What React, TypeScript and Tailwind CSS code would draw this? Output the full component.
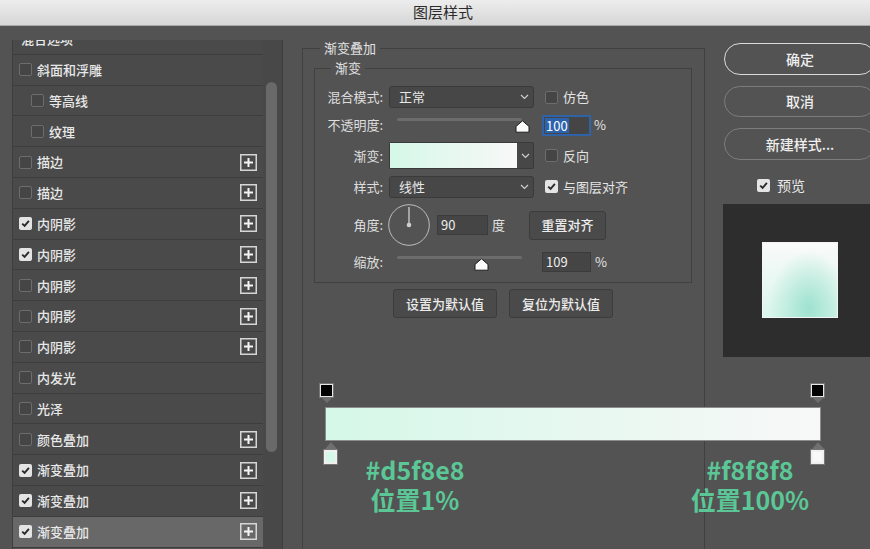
import React from "react";

type Layer = {
  label: string;
  checked?: boolean;
  plus?: boolean;
  sub?: boolean;
  active?: boolean;
  noBox?: boolean;
};

const layers: Layer[] = [
  { label: "混合选项", noBox: true },
  { label: "斜面和浮雕" },
  { label: "等高线", sub: true },
  { label: "纹理", sub: true },
  { label: "描边", plus: true },
  { label: "描边", plus: true },
  { label: "内阴影", checked: true, plus: true },
  { label: "内阴影", checked: true, plus: true },
  { label: "内阴影", plus: true },
  { label: "内阴影", plus: true },
  { label: "内阴影", plus: true },
  { label: "内发光" },
  { label: "光泽" },
  { label: "颜色叠加", plus: true },
  { label: "渐变叠加", checked: true, plus: true },
  { label: "渐变叠加", checked: true, plus: true },
  { label: "渐变叠加", checked: true, plus: true, active: true },
];

function CheckBox({ checked }: { checked?: boolean }) {
  if (checked) {
    return (
      <span className="flex h-[13px] w-[13px] shrink-0 items-center justify-center rounded-[2px] bg-[#e4e4e4]">
        <svg width="9" height="9" viewBox="0 0 9 9">
          <path d="M1.2 4.6 L3.6 6.9 L7.9 1.9" fill="none" stroke="#2a2a2a" strokeWidth="1.9" />
        </svg>
      </span>
    );
  }
  return <span className="block h-[13px] w-[13px] shrink-0 rounded-[2px] border border-[#6d6d6d] bg-[#454545]" />;
}

function PlusBox() {
  return (
    <svg width="17" height="17" viewBox="0 0 17 17" className="shrink-0">
      <rect x="0.75" y="0.75" width="15.5" height="15.5" fill="none" stroke="#d6d6d6" strokeWidth="1.5" />
      <path d="M8.5 4 V13 M4 8.5 H13" stroke="#f4f4f4" strokeWidth="2" />
    </svg>
  );
}

function Chevron() {
  return (
    <svg width="9" height="6" viewBox="0 0 9 6" className="shrink-0">
      <polyline points="1,1 4.5,4.5 8,1" fill="none" stroke="#cfcfcf" strokeWidth="1.2" />
    </svg>
  );
}

function Thumb() {
  return (
    <svg width="15" height="13" viewBox="0 0 15 13">
      <path
        d="M7.5 0.8 L14 6.4 V12.2 H1 V6.4 Z"
        fill="#fafafa"
        stroke="#1c1c1c"
        strokeWidth="1"
        strokeLinejoin="round"
      />
    </svg>
  );
}

function Select({ value }: { value: string }) {
  return (
    <div className="flex h-[22px] w-[145px] shrink-0 items-center justify-between rounded-[3px] border border-[#3a3a3a] bg-[#474747] pl-[9px] pr-[4px] text-[13px] text-[#e8e8e8]">
      <span>{value}</span>
      <Chevron />
    </div>
  );
}

function Label({ text }: { text: string }) {
  return <div className="w-[68px] shrink-0 text-right text-[13px] text-[#dedede]">{text}</div>;
}

function Check({ label, checked }: { label: string; checked?: boolean }) {
  return (
    <div className="ml-[5px] flex items-center gap-[5px] text-[13px] text-[#e4e4e4]">
      <CheckBox checked={checked} />
      <span>{label}</span>
    </div>
  );
}

function Slider({ pos }: { pos: number }) {
  return (
    <div className="relative h-full w-[145px] shrink-0">
      <div className="ml-[8px] mt-[10px] h-[3px] w-[125px] rounded-full bg-[#6c6c6c]" />
      {pos === 1 ? (
        <div className="absolute left-[126px] top-[12px]">
          <Thumb />
        </div>
      ) : (
        <div className="absolute left-[85px] top-[12px]">
          <Thumb />
        </div>
      )}
    </div>
  );
}

function Field({ w, children, active }: { w: string; children: React.ReactNode; active?: boolean }) {
  return (
    <div
      className={
        active
          ? `flex h-[21px] items-center border-2 border-[#2f62a6] bg-[#454545] pl-[1px] text-[13px] text-white ${w}`
          : `flex h-[20px] items-center border border-[#3b3b3b] bg-[#454545] pl-[3px] text-[13px] text-[#ececec] ${w}`
      }
    >
      {children}
    </div>
  );
}

function FlatButton({ children, w }: { children: React.ReactNode; w: string }) {
  return (
    <div
      className={`flex h-[29px] items-center justify-center rounded-[3px] border border-[#3c3c3c] bg-[#4a4a4a] text-[13px] font-medium text-[#ececec] ${w}`}
    >
      {children}
    </div>
  );
}

function PillButton({ children, primary, h }: { children: React.ReactNode; primary?: boolean; h: string }) {
  return (
    <div
      className={`flex w-[152px] items-center justify-center rounded-full text-[14px] font-medium text-[#efefef] ${h} ${
        primary ? "border-[1.5px] border-[#dadada]" : "border border-[#7c7c7c]"
      }`}
    >
      {children}
    </div>
  );
}

function StopTop() {
  return (
    <div className="flex w-[13px] flex-col items-center">
      <div className="h-[13px] w-[13px] border-[1.5px] border-[#e6e6e6] bg-black outline outline-1 outline-[#777]" />
      <svg width="12" height="6" viewBox="0 0 12 6">
        <polygon points="0,0 12,0 6,6" fill="#6e6e6e" />
      </svg>
    </div>
  );
}

function StopBottom({ color }: { color: string }) {
  return (
    <div className="flex w-[13px] flex-col items-center">
      <svg width="12" height="7" viewBox="0 0 12 7">
        <polygon points="6,0 12,7 0,7" fill="#707070" />
      </svg>
      <div className={`mt-[1px] h-[14px] w-[13px] border-2 border-[#f0f0f0] outline outline-1 outline-[#777] ${color}`} />
    </div>
  );
}

export default function App() {
  return (
    <div className="h-[549px] w-[870px] overflow-hidden bg-[#535353] font-['Noto_Sans_CJK_SC','Noto_Sans',sans-serif]">
      {/* title bar */}
      <div className="flex h-[26px] items-center border-b border-[#a9a9a9] bg-linear-to-b from-[#ededed] to-[#d6d6d6] pl-[413px] text-[15px] text-[#2b2b2b]">
        图层样式
      </div>

      <div className="flex">
        {/* layer list */}
        <div className="ml-[12px] mt-[14px] flex h-[520px] w-[271px] shrink-0 border-x border-[#3e3e3e]">
          <div className="w-[250px] overflow-hidden">
            <div className="mt-[-16px]">
              {layers.map((l, i) => (
                <div
                  key={i}
                  className={`flex h-[30.8px] items-center border-b border-[#3d3d3d] pr-[6px] text-[13px] font-medium text-[#e8e8e8] ${
                    l.active ? "bg-[#686868]" : "bg-[#4a4a4a]"
                  } ${l.sub ? "pl-[18px]" : "pl-[6px]"}`}
                >
                  {!l.noBox && <CheckBox checked={l.checked} />}
                  <span className={l.noBox ? "ml-[2px]" : "ml-[5px]"}>{l.label}</span>
                  <span className="flex-1" />
                  {l.plus && <PlusBox />}
                </div>
              ))}
            </div>
          </div>
          <div className="w-[19px] bg-[#484848] pl-[3px] pt-[42px]">
            <div className="h-[370px] w-[11px] rounded-full bg-[#696969]" />
          </div>
        </div>

        {/* gradient overlay settings */}
        <fieldset className="ml-[19px] mt-[14px] h-[540px] w-[403px] min-w-0 shrink-0 border-x border-t border-[#404040]">
          <legend className="ml-[17px] px-[4px] text-[13px] leading-[16px] text-[#e2e2e2]">渐变叠加</legend>
          <div className="pl-[11px]">
            <fieldset className="mt-[4px] w-[378px] min-w-0 border border-[#404040]">
              <legend className="ml-[16px] px-[4px] text-[13px] leading-[16px] text-[#e2e2e2]">渐变</legend>
              <div className="pb-[4px] pt-[10px]">
                <div className="flex h-[22px] items-center gap-[6px]">
                  <Label text="混合模式:" />
                  <Select value="正常" />
                  <Check label="仿色" />
                </div>
                <div className="flex h-[34px] items-center gap-[6px]">
                  <Label text="不透明度:" />
                  <Slider pos={1} />
                  <div className="ml-[2px] flex items-center">
                    <Field w="w-[49px]" active>
                      <span className="bg-[#2c63ae] px-[1px] leading-[15px]">100</span>
                    </Field>
                    <span className="ml-[3px] text-[13px] text-[#e4e4e4]">%</span>
                  </div>
                </div>
                <div className="flex h-[27px] items-center gap-[6px]">
                  <Label text="渐变:" />
                  <div className="flex h-[27px] w-[145px] shrink-0 rounded-[2px] border border-[#3a3a3a] bg-[#474747]">
                    <div className="w-[127px] bg-linear-to-r from-[#d5f8e8] to-[#f8f8f8]" />
                    <div className="flex flex-1 items-center justify-center">
                      <Chevron />
                    </div>
                  </div>
                  <Check label="反向" />
                </div>
                <div className="flex h-[35px] items-center gap-[6px]">
                  <Label text="样式:" />
                  <Select value="线性" />
                  <Check label="与图层对齐" checked />
                </div>
                <div className="flex h-[42px] items-center gap-[6px]">
                  <Label text="角度:" />
                  <svg width="42" height="42" viewBox="0 0 42 42" className="ml-[-1px] shrink-0">
                    <circle cx="21" cy="21" r="20.3" fill="none" stroke="#bdbdbd" strokeWidth="1" />
                    <line x1="21" y1="3" x2="21" y2="21" stroke="#d0d0d0" strokeWidth="1.3" />
                    <circle cx="21" cy="21" r="2.3" fill="#cfcfcf" />
                  </svg>
                  <div className="ml-[1px] flex items-center">
                    <Field w="w-[51px]">90</Field>
                    <span className="ml-[4px] text-[13px] text-[#e4e4e4]">度</span>
                  </div>
                  <div className="ml-[18px]">
                    <FlatButton w="w-[77px]">重置对齐</FlatButton>
                  </div>
                </div>
                <div className="flex h-[32px] items-center gap-[6px]">
                  <Label text="缩放:" />
                  <Slider pos={2} />
                  <div className="ml-[2px] flex items-center">
                    <Field w="w-[49px]">109</Field>
                    <span className="ml-[4px] text-[13px] text-[#e4e4e4]">%</span>
                  </div>
                </div>
              </div>
            </fieldset>
          </div>

          <div className="ml-[90px] mt-[6px] flex gap-[12px]">
            <FlatButton w="w-[104px]">设置为默认值</FlatButton>
            <FlatButton w="w-[104px]">复位为默认值</FlatButton>
          </div>

          {/* gradient editor */}
          <div className="ml-[17px] mt-[66px] w-[504px]">
            <div className="flex justify-between">
              <StopTop />
              <StopTop />
            </div>
            <div className="ml-[5px] mr-[3px] mt-[4px] h-[34px] border border-[#8c8c8c] bg-linear-to-r from-[#d5f8e8] to-[#f8f8f8]" />
            <div className="mt-[1px] flex items-start">
              <div className="ml-[4px]">
                <StopBottom color="bg-[#d5f8e8]" />
              </div>
              <div className="ml-[18px] mt-[12px] w-[120px] text-center text-[25px] font-bold leading-[30px] text-[#5bc796]">
                <div>#d5f8e8</div>
                <div>位置1%</div>
              </div>
              <div className="flex-1" />
              <div className="mt-[12px] w-[122px] text-center text-[25px] font-bold leading-[30px] text-[#5bc796]">
                <div>#f8f8f8</div>
                <div>位置100%</div>
              </div>
              <StopBottom color="bg-[#f8f8f8]" />
            </div>
          </div>
        </fieldset>

        {/* right column */}
        <div className="ml-[19px] mt-[17px] w-[160px] shrink-0">
          <PillButton primary h="h-[32px]">确定</PillButton>
          <div className="mt-[11px]">
            <PillButton h="h-[31px]">取消</PillButton>
          </div>
          <div className="mt-[11px]">
            <PillButton h="h-[32px]">新建样式...</PillButton>
          </div>
          <div className="ml-[33px] mt-[18px] flex h-[14px] items-center gap-[7px] text-[14px] text-[#e8e8e8]">
            <CheckBox checked />
            <span>预览</span>
          </div>
          <div className="ml-[-1px] mt-[12px] h-[153px] w-[160px] bg-[#2d2d2d] pl-[39px] pt-[38px]">
            <div className="h-[76px] w-[76px] border border-[#f4f4f4] bg-[radial-gradient(ellipse_at_62%_88%,#9fe2cf_0%,rgba(200,240,225,0)_62%),linear-gradient(to_bottom,#fafafa,#d8f6ea)]" />
          </div>
        </div>
      </div>
    </div>
  );
}
